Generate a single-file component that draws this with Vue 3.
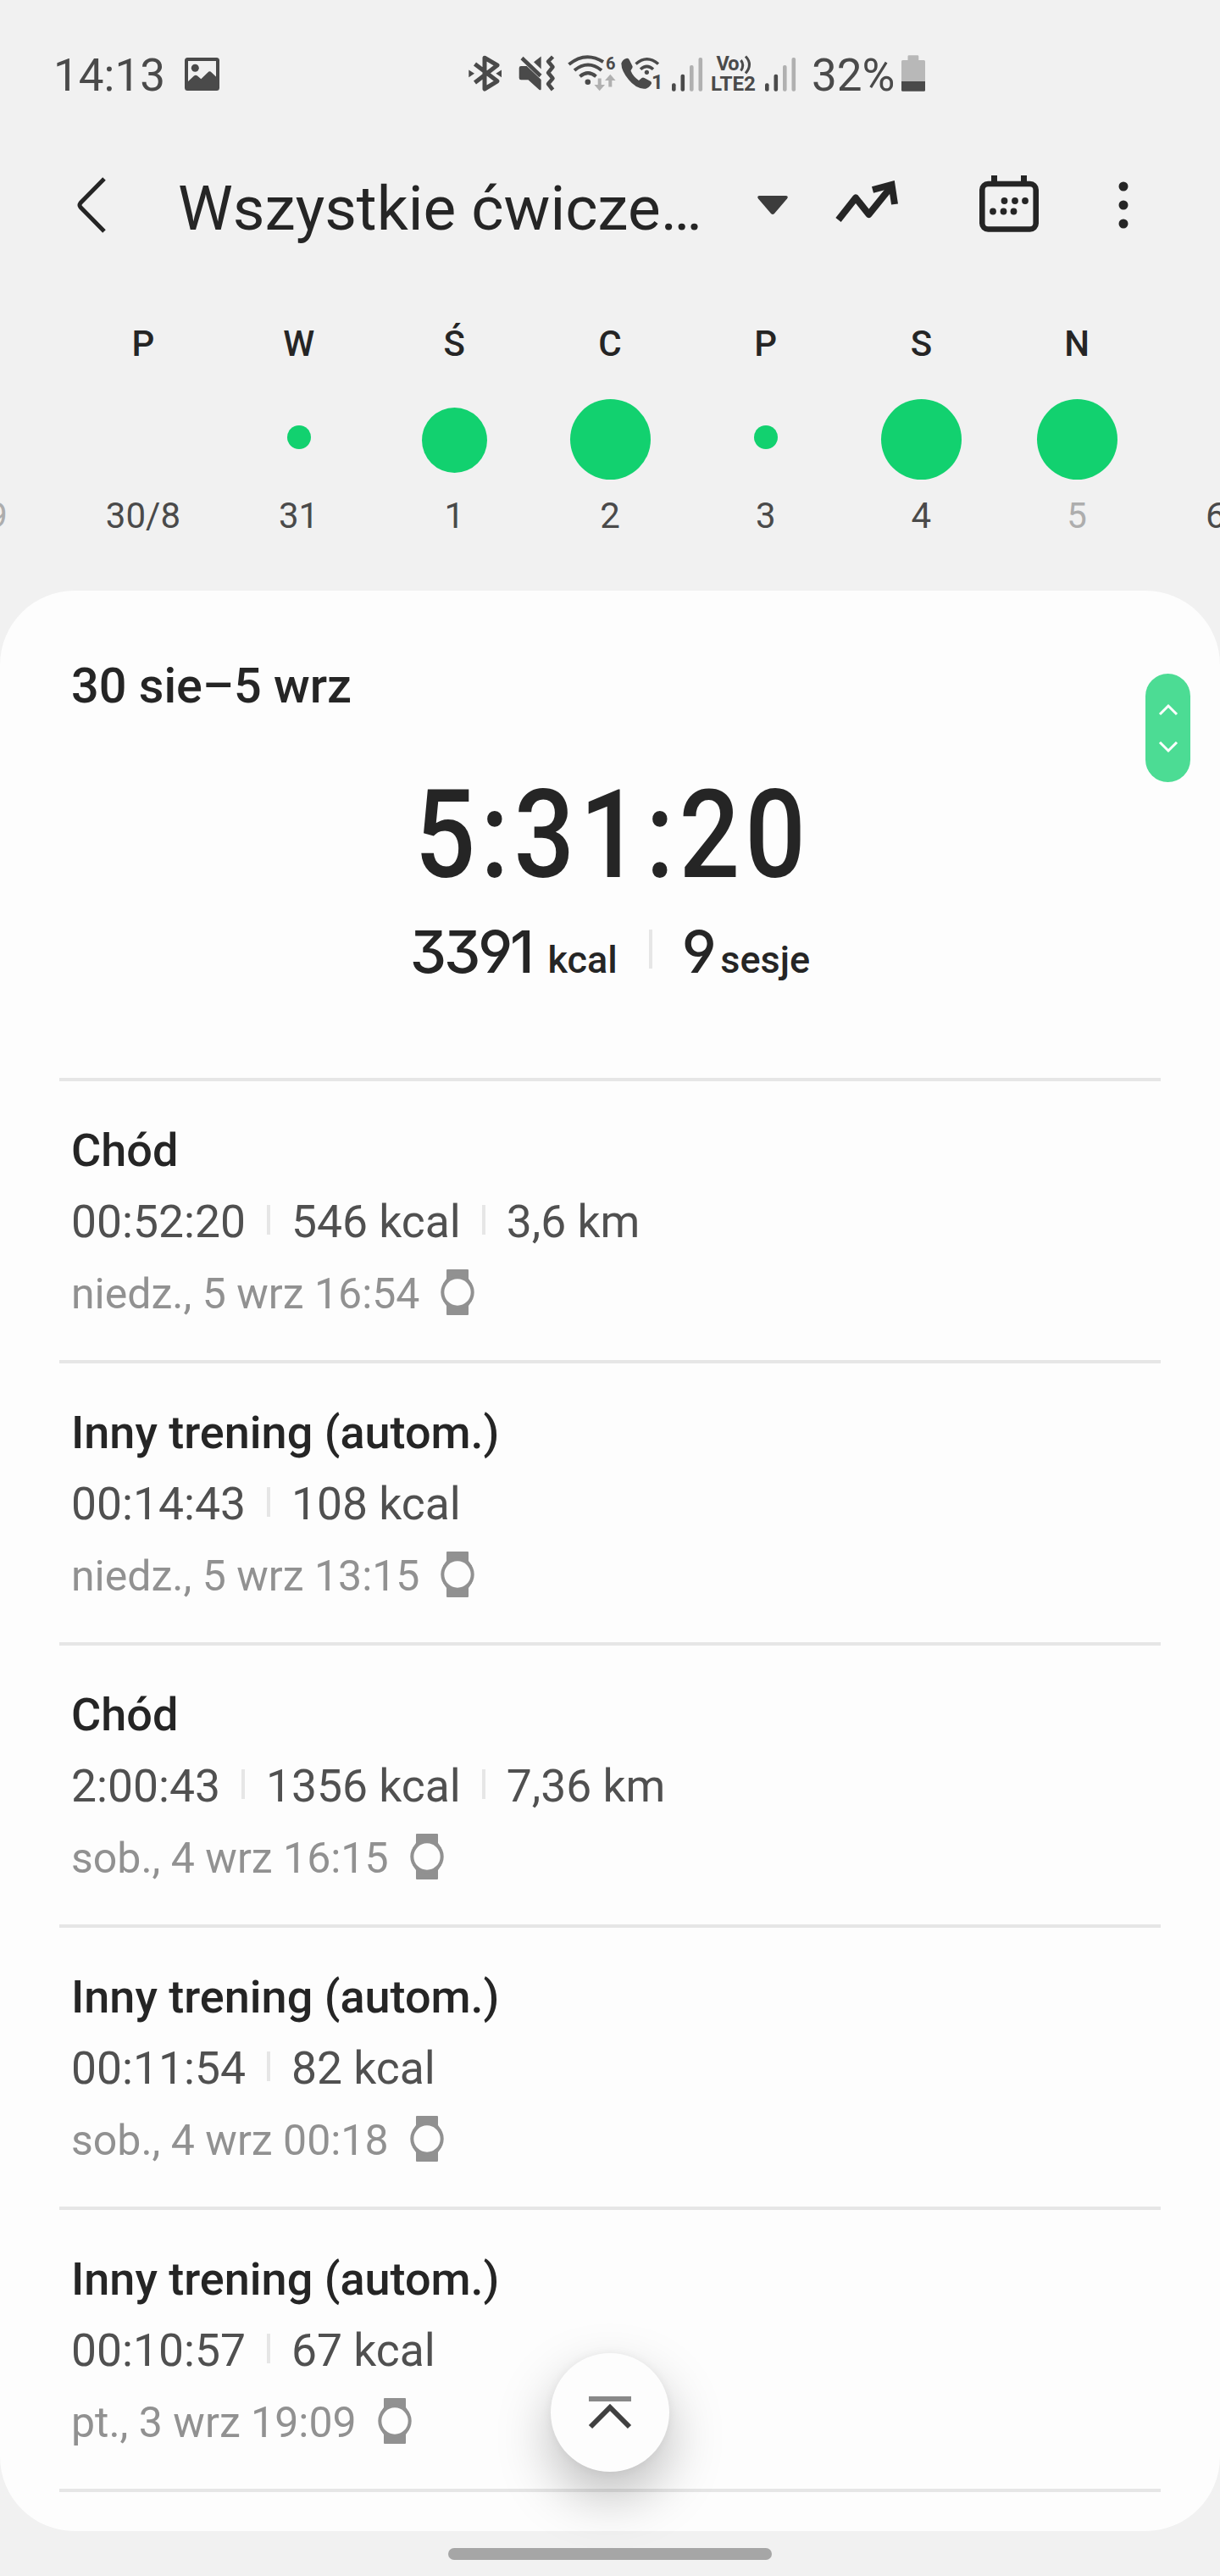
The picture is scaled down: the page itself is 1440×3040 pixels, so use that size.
<template>
    <main class="screen">
        <div class="status-bar">
            <span class="status-text">14:13</span>
            <svg class="picture" width="41" height="50" viewBox="0 0 41 50">
                <rect x="2" y="6" width="37" height="35" rx="1.5" fill="none" stroke="#4a4a4a" stroke-width="4" />
                <circle cx="12.3" cy="16.3" r="4.5" />
                <path d="M3 33L11 25.6Q13 24 15 25.6L19.3 29.3L27.3 21.4Q29.5 19.3 31.7 21.4L38 27.5V42H3Z" />
            </svg>

            <div class="indicators">
                <svg width="40" height="50" viewBox="0 0 40 50">
                    <path d="M7.5 11.5L34 31.8L19 41V4.2L34 13L7.5 33.5" fill="none" stroke="#4a4a4a" stroke-width="5" stroke-linejoin="round" />
                    <path d="M.3 18.5L7 22.8L.3 27.2ZM39 18.5L32.3 22.8L39 27.2Z" />
                </svg>
                <svg class="mute" width="44" height="50" viewBox="0 0 44 50">
                    <path d="M3 14H9.7L26.7 30V41Q26.7 43 24.5 42L11.5 30.3H3Q.7 30.3 .7 28V16.3Q.7 14 3 14Z" />
                    <path d="M26.7 2.5V17.5L18 9.3Z" />
                    <path d="M4 4.5L26 25.5" stroke="#4a4a4a" stroke-width="4.5" />
                    <path d="M40.5 3L35 8.5L40.5 15L35 21.8L40.5 28.5L35 35L40.5 42" fill="none" stroke="#4a4a4a" stroke-width="4.5" stroke-linejoin="round" />
                </svg>
                <svg class="wifi" width="58" height="50" viewBox="0 0 58 50">
                    <g fill="none" stroke="#4a4a4a" stroke-width="4">
                        <path d="M1.5 12Q21 -4 42 9" />
                        <path d="M8 19Q24 6 40 19" />
                        <path d="M14.5 26.2Q24 18 33.5 26.2" />
                    </g>
                    <circle cx="23.8" cy="32.8" r="3.3" />
                    <path class="faded" d="M35.7 28.5H39.7V36H44L37.7 43.3L31.4 36H35.7ZM48.3 38.5H52.3V31H56.6L50.3 23.8L44 31H48.3Z" />
                    <text x="45" y="17.5" font-size="20" font-weight="700">6</text>
                </svg>
                <svg class="call" width="49" height="50" viewBox="0 0 49 50">
                    <path d="M7 4.8Q9 4.5 10 7L13.5 14Q14 16 12.5 17.5L11.5 19.5Q14 26 21 31L24.5 28Q26 27 27.5 28L35 32Q36.8 33.5 35.5 35.5Q32 41 27 40.8Q17 40 9 30Q0 19 .4 10.5Q2 6 7 4.8Z" />
                    <g fill="none" stroke="#4a4a4a" stroke-width="3.5">
                        <path d="M17.5 11.5Q30.5 0 44 11.5" />
                        <path d="M23 17.8Q30.5 11 38 17.8" />
                    </g>
                    <circle cx="30.4" cy="21.3" r="2.6" />
                    <text x="36" y="41" font-size="24" font-weight="700">1</text>
                </svg>
                <svg class="bars-first" width="38" height="50" viewBox="0 0 38 50">
                    <rect v-for="bar in signalBars" :key="bar.x" :class="{ faded: !bar.on }" :x="bar.x" :y="bar.y" width="4.6" :height="43.7 - bar.y" rx="2" />
                </svg>
                <svg class="volte" width="56" height="50" viewBox="0 0 56 50">
                    <text x="7.5" y="19.2" font-size="23.5" font-weight="700" textLength="27">Vo</text>
                    <text x="1" y="42.8" font-size="23.5" font-weight="700" textLength="53" lengthAdjust="spacingAndGlyphs">LTE2</text>
                    <path d="M36.5 7Q41 13 36.5 19.5M42 2.5Q51 12 42 22.5" fill="none" stroke="#4a4a4a" stroke-width="3" />
                </svg>
                <svg class="bars-second" width="38" height="50" viewBox="0 0 38 50">
                    <rect v-for="bar in signalBars" :key="bar.x" :class="{ faded: !bar.on }" :x="bar.x" :y="bar.y" width="4.6" :height="43.7 - bar.y" rx="2" />
                </svg>
                <span class="status-text percent">32%</span>
                <svg class="battery" width="28" height="50" viewBox="0 0 28 50">
                    <path fill="#b8b8b8" d="M9 1.3H19Q20.3 1.3 20.3 2.6V7H26.5Q28 7 28 8.5V33H0V8.5Q0 7 1.5 7H7.5V2.6Q7.5 1.3 9 1.3Z" />
                    <path d="M0 32H28V42.2Q28 43.7 26.5 43.7H1.5Q0 43.7 0 42.2Z" />
                </svg>
            </div>
        </div>

        <header class="app-bar">
            <svg class="back" width="36" height="68" viewBox="0 0 36 68">
                <path d="M33 3L5 31.5Q3 34 5 36.5L33 65" fill="none" stroke="#252525" stroke-width="5" />
            </svg>
            <h1>Wszystkie ćwicze…</h1>
            <svg class="caret" width="38" height="26" viewBox="0 0 38 26">
                <path d="M3 2H35Q38 2.5 36 5.5L21 23Q19 25 17 23L2 5.5Q0 2.5 3 2Z" fill="#3c3c3c" />
            </svg>
            <svg class="trend" width="76" height="54" viewBox="0 0 76 54">
                <path d="M4.5 48.5L25 22.5L40.5 42L68 8" fill="none" stroke="#252525" stroke-width="8" stroke-linejoin="round" />
                <path d="M45 13L67.5 7L71 30" fill="none" stroke="#252525" stroke-width="8" />
            </svg>
            <svg class="calendar" width="70" height="68" viewBox="0 0 70 68">
                <rect x="3.3" y="11" width="63.4" height="53.5" rx="7" fill="none" stroke="#252525" stroke-width="6.6" />
                <path d="M14 1H21V9H14ZM49 1H56V9H49Z" fill="#252525" />
                <g fill="#252525">
                    <circle v-for="dot in calendarDots" :key="dot.join()" :cx="dot[0]" :cy="dot[1]" r="3.9" />
                </g>
            </svg>
            <svg class="more" width="12" height="56" viewBox="0 0 12 56">
                <g fill="#252525">
                    <circle cx="6" cy="6" r="5.5" />
                    <circle cx="6" cy="28" r="5.5" />
                    <circle cx="6" cy="50" r="5.5" />
                </g>
            </svg>
        </header>

        <section class="week">
            <div v-for="day in days" :key="day.date" class="day" :class="day.state">
                <span class="weekday">{{ day.name }}</span>
                <div class="dot-box">
                    <i v-if="day.size" class="dot" :class="day.size"></i>
                </div>
                <span class="date">{{ day.date }}</span>
            </div>
        </section>

        <section class="card">
            <div class="overview">
                <h2>30 sie–5 wrz</h2>
                <p class="total-time">5:31:20</p>
                <div class="totals">
                    <span class="value calories">3391</span>
                    <span class="unit">kcal</span>
                    <i class="bar"></i>
                    <span class="value">9</span>
                    <span class="unit">sesje</span>
                </div>
            </div>

            <ul class="workouts">
                <li v-for="workout in workouts" :key="workout.when">
                    <h3>{{ workout.name }}</h3>
                    <p class="stats">
                        <span v-for="stat in workout.stats" :key="stat">{{ stat }}</span>
                    </p>
                    <p class="when">
                        {{ workout.when }}
                        <svg width="42" height="56" viewBox="0 0 42 56">
                            <path d="M9 1H33Q34 1 34 2V12L38 18V38L34 44V54Q34 55 33 55H9Q8 55 8 54V44L4 38V18L8 12V2Q8 1 9 1Z" fill="#919191" />
                            <circle cx="21" cy="28" r="17.7" fill="#fdfdfd" stroke="#919191" stroke-width="4" />
                        </svg>
                    </p>
                </li>
            </ul>

            <div class="scroller">
                <svg width="24" height="58" viewBox="0 0 24 58">
                    <path d="M2 13L12 3L22 13M2 46L12 56L22 46" fill="none" stroke="#fff" stroke-width="3" />
                </svg>
            </div>
            <button class="to-top" type="button">
                <svg width="52" height="40" viewBox="0 0 52 40">
                    <path d="M1 4H51" stroke="#888" stroke-width="6" />
                    <path d="M3 37L26 14L49 37" fill="none" stroke="#404040" stroke-width="6" />
                </svg>
            </button>
        </section>

        <div class="nav-bar"><i></i></div>
    </main>
</template>

<script setup>
    const signalBars = [
        { x: 0, y: 34.3, on: true },
        { x: 10.5, y: 23.7, on: true },
        { x: 21, y: 13, on: false },
        { x: 31.5, y: 4, on: false },
    ];

    const calendarDots = [
        [29.5, 31], [42, 31], [54, 31],
        [16, 43.5], [28.5, 43.5], [40.5, 43.5],
    ];

    const days = [
        { name: '', date: '29', state: 'outside' },
        { name: 'P', date: '30/8' },
        { name: 'W', date: '31', size: 'small' },
        { name: 'Ś', date: '1', size: 'medium' },
        { name: 'C', date: '2', size: 'large' },
        { name: 'P', date: '3', size: 'small' },
        { name: 'S', date: '4', size: 'large' },
        { name: 'N', date: '5', size: 'large', state: 'outside' },
        { name: '', date: '6', state: 'next' },
    ];

    const workouts = [
        { name: 'Chód', stats: ['00:52:20', '546 kcal', '3,6 km'], when: 'niedz., 5 wrz 16:54' },
        { name: 'Inny trening (autom.)', stats: ['00:14:43', '108 kcal'], when: 'niedz., 5 wrz 13:15' },
        { name: 'Chód', stats: ['2:00:43', '1356 kcal', '7,36 km'], when: 'sob., 4 wrz 16:15' },
        { name: 'Inny trening (autom.)', stats: ['00:11:54', '82 kcal'], when: 'sob., 4 wrz 00:18' },
        { name: 'Inny trening (autom.)', stats: ['00:10:57', '67 kcal'], when: 'pt., 3 wrz 19:09' },
    ];
</script>

<style>
body {
  margin: 0;
  background: #f1f1f1;
}
</style>

<style scoped>
.screen {
  width: 1440px;
  height: 3040px;
  overflow: hidden;
  background: #f1f1f1;
  color: #252525;
  font-family: Roboto, "Noto Sans", sans-serif;
}
h1,
h2,
h3,
p,
ul {
  margin: 0;
  padding: 0;
  font-weight: 500;
  white-space: nowrap;
}
svg {
  display: block;
  flex: none;
  overflow: visible;
}

/* status bar */
.status-bar {
  display: flex;
  align-items: center;
  height: 178px;
  padding-left: 63px;
  box-sizing: border-box;
  color: #4a4a4a;
}
.status-bar svg {
  fill: #4a4a4a;
}
.status-bar .faded {
  fill: #b0b0b0;
}
.status-text {
  width: 132px;
  font-size: 53px;
  line-height: 60px;
}
.picture {
  margin-left: 23px;
}
.indicators {
  display: flex;
  align-items: center;
  margin-left: 294px;
}
.mute {
  margin-left: 19px;
}
.wifi {
  margin-left: 14px;
}
.call {
  margin-left: 5px;
}
.bars-first {
  margin-left: 11px;
}
.volte {
  margin-left: 7px;
}
.bars-second {
  margin-left: 9px;
}
.percent {
  width: 98px;
  margin-left: 17px;
}
.battery {
  margin-left: 8px;
}

/* app bar */
.app-bar {
  display: flex;
  align-items: center;
  height: 128px;
}
.back {
  margin-left: 90px;
}
h1 {
  width: 683px;
  margin-left: 84px;
  padding-top: 8px;
  font-size: 73px;
  font-weight: 400;
  line-height: 100px;
}
.trend {
  margin-left: 54px;
  margin-top: -8px;
}
.calendar {
  margin-left: 95px;
  margin-top: -4px;
}
.more {
  margin-left: 94px;
}

/* week strip */
.week {
  display: flex;
  justify-content: center;
  width: 1440px;
  height: 391px;
  padding-top: 70px;
  box-sizing: border-box;
  overflow: hidden;
}
.day {
  display: flex;
  flex: none;
  flex-direction: column;
  align-items: center;
  width: 183.7px;
  font-size: 42px;
  line-height: 60px;
}
.weekday {
  height: 60px;
  font-weight: 500;
}
.dot-box {
  display: flex;
  align-items: center;
  height: 143px;
  padding-top: 22px;
  box-sizing: border-box;
}
.dot {
  border-radius: 50%;
  background: #12d16f;
}
.small {
  width: 28px;
  height: 28px;
  margin-top: -5px;
}
.medium {
  width: 77px;
  height: 77px;
  margin-top: 2px;
}
.large {
  width: 95px;
  height: 95px;
}
.date {
  color: #4a4a4a;
}
.outside .date {
  color: #adadad;
}
.next .date {
  padding-right: 40px;
}

/* card */
.card {
  position: relative;
  height: 2290px;
  border-radius: 88px;
  background: #fdfdfd;
}
.overview {
  display: flex;
  flex-direction: column;
  align-items: center;
  height: 575px;
  padding-top: 73px;
  box-sizing: border-box;
}
h2 {
  align-self: flex-start;
  margin-left: 84px;
  font-size: 57.6px;
  line-height: 80px;
}
.total-time {
  margin-top: 65px;
  padding-left: 8px;
  font-size: 145px;
  line-height: 140px;
  letter-spacing: 7px;
  transform: scaleX(0.87);
}
.totals {
  display: flex;
  align-items: baseline;
  margin-top: 28px;
}
.value {
  font-family: Inter, sans-serif;
  font-size: 69px;
  font-weight: 450;
  line-height: 80px;
  letter-spacing: -3.2px;
  font-feature-settings: "ss01", "cv03", "cv04", "cv09";
}
.calories {
  margin-right: 11px;
}
.unit {
  margin-left: 8px;
  font-size: 45px;
  font-weight: 500;
}
.bar {
  align-self: flex-start;
  width: 4px;
  height: 46px;
  margin: 14px 35px 0 37px;
  background: #e6e6e6;
}

.workouts {
  margin: 0 70px;
  border-bottom: 4px solid #e6e6e6;
  list-style: none;
}
li {
  height: 333px;
  padding: 40px 14px 0;
  border-top: 4px solid #e6e6e6;
  box-sizing: border-box;
}
h3 {
  font-size: 54px;
  line-height: 84px;
}
.stats {
  display: flex;
  align-items: center;
  color: #505050;
  font-size: 53.4px;
  font-weight: 400;
  line-height: 84px;
}
.stats span {
  display: flex;
  align-items: center;
}
.stats span + span::before {
  width: 4px;
  height: 35px;
  margin: -5px 25px 0 25px;
  background: #e6e6e6;
  content: "";
}
.when {
  display: flex;
  align-items: center;
  gap: 24px;
  color: #919191;
  font-size: 50px;
  font-weight: 400;
  line-height: 87px;
}
.when svg {
  margin-top: -5px;
}

/* controls floating over the list */
.scroller {
  position: absolute;
  top: 98px;
  right: 35px;
  display: flex;
  align-items: center;
  justify-content: center;
  width: 53px;
  height: 128px;
  border-radius: 27px;
  background: #4cdc94;
}
.to-top {
  position: absolute;
  top: 2080px;
  left: 650px;
  display: flex;
  align-items: center;
  justify-content: center;
  width: 140px;
  height: 140px;
  padding: 0;
  border: 0;
  border-radius: 50%;
  background: #fdfdfd;
  box-shadow: 0 28px 64px rgba(0, 0, 0, 0.26), 0 0 12px rgba(0, 0, 0, 0.05);
}

.nav-bar {
  display: flex;
  align-items: center;
  justify-content: center;
  height: 53px;
}
.nav-bar i {
  width: 382px;
  height: 14px;
  border-radius: 7px;
  background: #a6a6a6;
}
</style>
